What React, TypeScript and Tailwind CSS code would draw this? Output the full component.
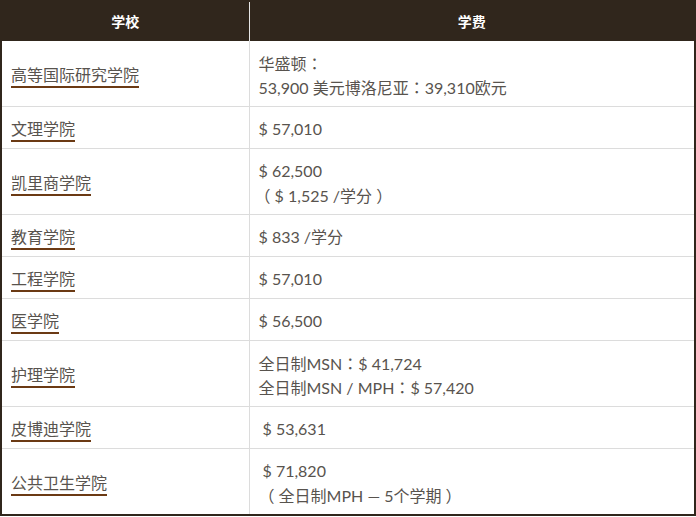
import React from "react";

const font = { fontFamily: '"Lato", "Noto Sans CJK SC", sans-serif' };

const C = ({ children }: { children: React.ReactNode }) => (
  <span style={{ fontFamily: '"Noto Sans CJK TC", sans-serif' }}>{children}</span>
);

const P = ({ children }: { children: React.ReactNode }) => (
  <span className="ml-[-4px]" style={{ fontFamily: '"Noto Sans CJK SC", sans-serif' }}>{children}</span>
);

const L = ({ children }: { children: React.ReactNode }) => (
  <div className="h-[24px] leading-[24px] whitespace-nowrap overflow-visible">{children}</div>
);

type Row = { name: string; fee: React.ReactNode; indent?: boolean };

const rows: Row[] = [
  { name: "高等国际研究学院", fee: (<><L>华盛顿<C>：</C></L><L>53,900 美元博洛尼亚<C>：</C>39,310欧元</L></>) },
  { name: "文理学院", fee: <L>$ 57,010</L> },
  { name: "凯里商学院", fee: (<><L>$ 62,500</L><L><P>（</P> $ 1,525 /学分 <C>）</C></L></>) },
  { name: "教育学院", fee: <L>$ 833 /学分</L> },
  { name: "工程学院", fee: <L>$ 57,010</L> },
  { name: "医学院", fee: <L>$ 56,500</L> },
  { name: "护理学院", fee: (<><L>全日制MSN<C>：</C>$ 41,724</L><L>全日制MSN / MPH<C>：</C>$ 57,420</L></>) },
  { name: "皮博迪学院", fee: <L>$ 53,631</L>, indent: true },
  { name: "公共卫生学院", fee: (<><L>$ 71,820</L><L><P>（</P> 全日制MPH — 5个学期 <C>）</C></L></>), indent: true },
];

export default function App() {
  return (
    <div className="w-[696px] h-[517px] bg-white overflow-hidden" style={font}>
      <table className="w-[696px] border-collapse border-2 border-[#30261c] table-fixed">
        <colgroup>
          <col className="w-[248px]" />
          <col />
        </colgroup>
        <thead>
          <tr className="bg-[#30261c] h-[40px]">
            <th className="text-white text-[14px] font-bold text-center border-r border-[#e6e6e6] p-0">学校</th>
            <th className="text-white text-[14px] font-bold text-center p-0">学费</th>
          </tr>
        </thead>
        <tbody>
          {rows.map((r, i) => (
            <tr key={i} className="border-b border-[#dcdcdc] last:border-b-0">
              <td className="border-r border-[#dcdcdc] pl-[9px] pr-2 pt-[10px] pb-[7px] align-middle">
                <div className="h-[24px] leading-[24px]">
                  <span className="text-[16px] text-[#58534e] border-b-2 border-[#6b3a14] pb-[2px]">
                    {r.name}
                  </span>
                </div>
              </td>
              <td className={`${r.indent ? "pl-[13px]" : "pl-[9px]"} pr-2 pt-[10px] pb-[7px] text-[16px] text-[#58534e] align-top`}>
                {r.fee}
              </td>
            </tr>
          ))}
        </tbody>
      </table>
    </div>
  );
}
